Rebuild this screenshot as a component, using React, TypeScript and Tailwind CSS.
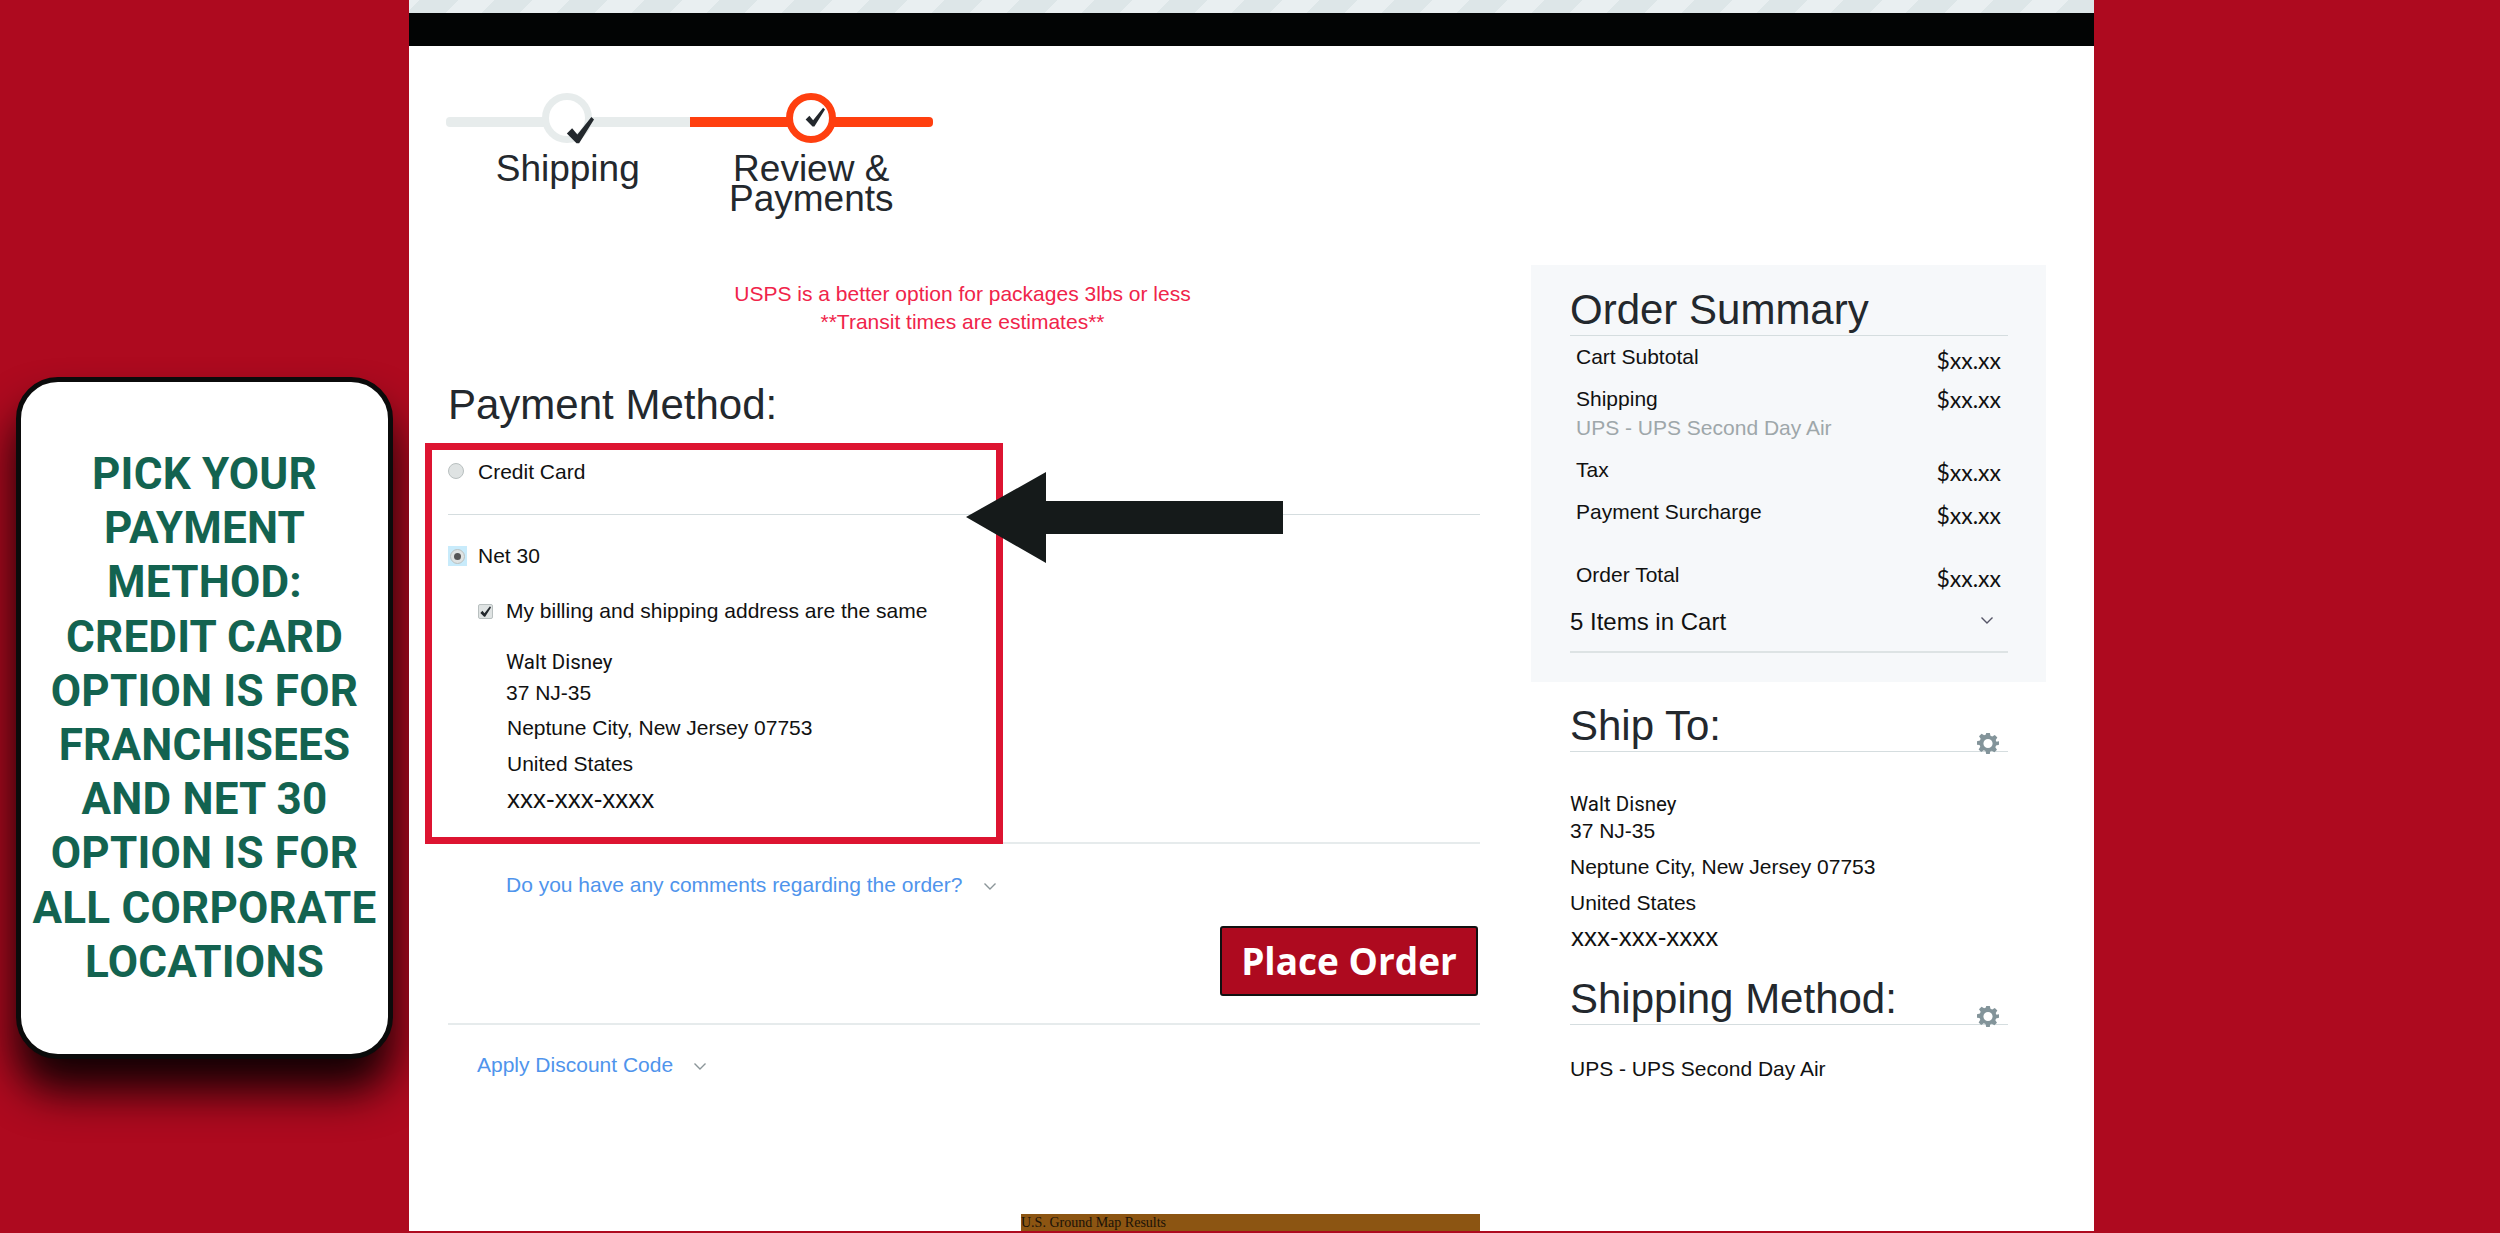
const sans = "font-['Liberation_Sans',Arial,sans-serif]";

const summaryRows = [
  { label: 'Cart Subtotal', rowClass: 'h-[42px] pt-[8px]', valueClass: 'mt-[3px]' },
  { label: 'Shipping', sub: 'UPS - UPS Second Day Air', rowClass: 'h-[72px] pt-[8px]', valueClass: 'mt-0' },
  { label: 'Tax', rowClass: 'h-[42px] pt-[7px]', valueClass: 'mt-[2px]' },
  { label: 'Payment Surcharge', rowClass: 'h-[65px] pt-[7px]', valueClass: 'mt-[3px]' },
  { label: 'Order Total', rowClass: 'h-[46px] pt-[5px]', valueClass: 'mt-[3px]' },
];

function Chevron({ className }: { className: string }) {
  return (
    <svg viewBox="0 0 14 9" className={className} fill="none" stroke="currentColor" strokeWidth="1.4">
      <path d="M1.5 1.5 7 7l5.5-5.5" />
    </svg>
  );
}

function Gear() {
  return (
    <svg viewBox="0 0 24 24" className="w-[22px] h-[22px] text-[#83949a] -mb-[3px] mr-[9px]" fill="currentColor">
      <path
        fillRule="evenodd"
        d="M10 1h4l.7 3.2 1.9.8 2.8-1.8 2.8 2.8-1.8 2.8.8 1.9L24 10v4l-3.2.7-.8 1.9 1.8 2.8-2.8 2.8-2.8-1.8-1.9.8L14 24h-4l-.7-3.2-1.9-.8-2.8 1.8-2.8-2.8 1.8-2.8-.8-1.9L0 14v-4l3.2-.7.8-1.9-1.8-2.8 2.8-2.8 2.8 1.8 1.9-.8L10 1Zm2 6.5a5 5 0 1 0 0 10 5 5 0 0 0 0-10Z"
      />
    </svg>
  );
}

function Check({ className }: { className: string }) {
  return (
    <svg viewBox="0 0 32 32" className={className} fill="#23282d">
      <path d="M1 20l6-6 6 7L29 1l3 3-17 27h-3L1 20Z" />
    </svg>
  );
}

function SideHeading({ title, withGear }: { title: string; withGear?: boolean }) {
  return (
    <div className="flex items-end justify-between border-b border-[#d5dddf] h-[56px]">
      <h2 className="text-[42px] leading-[50px] text-[#23282d]">{title}</h2>
      {withGear && <Gear />}
    </div>
  );
}

function ProgressStep({
  label,
  active,
  first,
  last,
}: {
  label: React.ReactNode;
  active?: boolean;
  first?: boolean;
  last?: boolean;
}) {
  return (
    <div className="w-[243.5px] flex flex-col items-center">
      <div className="relative w-full h-[50px] shrink-0 flex items-center">
        <div
          className={`w-full h-[10px] mt-[8px] ${active ? 'bg-[#ff3f0f]' : 'bg-[#e7ecec]'} ${first ? 'rounded-l' : ''} ${last ? 'rounded-r' : ''}`}
        />
        <div
          className={`absolute left-[96px] top-0 w-[50px] h-[50px] rounded-full bg-white border-[7px] ${active ? 'border-[#ff3f0f]' : 'border-[#e7ecec]'}`}
        />
        {active ? (
          <Check className="absolute left-[114px] top-[14px] w-[22px] h-[20px]" />
        ) : (
          <Check className="absolute left-[118px] top-[23px] w-[32px] h-[28px]" />
        )}
      </div>
      <div className="mt-[11px] text-[37px] leading-[30px] text-[#23282d] text-center">{label}</div>
    </div>
  );
}

export default function App() {
  return (
    <div className={`w-[2500px] h-[1233px] flex overflow-hidden bg-[#ae0a1f] ${sans}`}>
      {/* Left callout */}
      <div className="w-[409px] shrink-0 pl-[16px] pt-[377px]">
        <div className="w-[377px] h-[682px] rounded-[42px] border-[5px] border-[#0b0b0b] bg-white shadow-[0_32px_44px_rgba(0,0,0,0.9)] pt-[65px] flex flex-col items-center">
          <p className="font-['Roboto',sans-serif] font-bold text-[#136350] text-[44px] leading-[54.2px] tracking-[0.2px] text-center whitespace-nowrap">
            PICK YOUR
            <br />
            PAYMENT
            <br />
            METHOD:
            <br />
            CREDIT CARD
            <br />
            OPTION IS FOR
            <br />
            FRANCHISEES
            <br />
            AND NET 30
            <br />
            OPTION IS FOR
            <br />
            ALL CORPORATE
            <br />
            LOCATIONS
          </p>
        </div>
      </div>

      {/* Page */}
      <div className="w-[1685px] shrink-0 h-[1231px] bg-white flex flex-col">
        <div className="h-[13px] bg-[repeating-linear-gradient(-45deg,#dde6e8_0px,#dde6e8_27px,#e9eff1_27px,#e9eff1_53px)]" />
        <div className="h-[33px] bg-[#020404]" />

        <div className="pl-[37px] pt-[47px] flex h-[168px]">
          <ProgressStep label="Shipping" first />
          <ProgressStep
            label={
              <>
                Review &amp;
                <br />
                Payments
              </>
            }
            active
            last
          />
        </div>

        <div className="flex flex-1 min-h-0">
          {/* Main column */}
          <div className="ml-[39px] w-[1032px] shrink-0 flex flex-col">
            <div className="mt-[66px] text-center text-[21px] leading-[28px] text-[#f0244a] pr-[3px]">
              <p>USPS is a better option for packages 3lbs or less</p>
              <p>**Transit times are estimates**</p>
            </div>

            <h2 className="mt-[44px] h-[50px] text-[42px] leading-[50px] text-[#23282d]">Payment Method:</h2>

            <div className="relative mt-[13px]">
              {/* highlight box over the form */}
              <div className="absolute -left-[23px] top-0 w-[578px] h-[401px] border-[7px] border-[#dd1431]" />
              {/* arrow */}
              <svg viewBox="0 0 317 91" className="absolute left-[518px] top-[29px] w-[317px] h-[91px]" fill="#151a1a">
                <path d="M0 45 80 0v29h237v33H80v29L0 45Z" />
              </svg>

              <div className="h-[72px] border-b border-[#d5dddf] pt-[17px] flex items-start">
                <span className="mt-[3px] w-4 h-4 rounded-full bg-[#dfe3e3] border border-[#b9c0c0]" />
                <span className="ml-[14px] text-[21px] leading-[24px] text-[#111]">Credit Card</span>
              </div>

              <div className="h-[329px] border-b-2 border-[#e6ebec] pt-[29px]">
                <div className="flex items-center h-[24px]">
                  <span className="w-[19px] h-[20px] flex items-center justify-center bg-[#c8ebfb]">
                    <span className="w-[15px] h-[15px] rounded-full bg-[#dfe3e3] border border-[#b9c0c0] flex items-center justify-center">
                      <span className="w-[7px] h-[7px] rounded-full bg-[#555]" />
                    </span>
                  </span>
                  <span className="ml-[11px] text-[21px] leading-[24px] text-[#111]">Net 30</span>
                </div>

                <div className="ml-[30px] mt-[31px] flex items-center h-[24px]">
                  <span className="w-[15px] h-[15px] rounded-[2px] bg-[#dfe3e3] border border-[#b9c0c0] flex items-center justify-center">
                    <Check className="w-[11px] h-[11px]" />
                  </span>
                  <span className="ml-[13px] text-[21px] leading-[24px] text-[#111]">
                    My billing and shipping address are the same
                  </span>
                </div>

                <div className="ml-[58px] mt-[27px] text-[21px] text-[#111]">
                  <p className="font-['Roboto',sans-serif] text-[20.5px] leading-[24px]">Walt Disney</p>
                  <p className="leading-[24px] mt-[7px]">37 NJ-35</p>
                  <p className="leading-[24px] mt-[11px] ml-[1px]">Neptune City, New Jersey 07753</p>
                  <p className="leading-[24px] mt-[12px] ml-[1px]">United States</p>
                  <p className="text-[26px] leading-[24px] mt-[11px] ml-[1px]">xxx-xxx-xxxx</p>
                </div>
              </div>
            </div>

            <div className="ml-[58px] mt-[29px] h-[24px] flex items-center text-[21px] text-[#4f94ec]">
              <span>Do you have any comments regarding the order?</span>
              <Chevron className="ml-[21px] w-[14px] h-[9px] mt-[3px] text-[#8b9599]" />
            </div>

            <div className="flex justify-end mt-[29px] mr-[2px]">
              <button className="w-[258px] h-[70px] rounded-[3px] border-2 border-[#111] bg-[#ae0a1f] font-['Open_Sans',sans-serif] font-bold text-white text-[37px]">
                Place Order
              </button>
            </div>

            <div className="mt-[27px] border-t-2 border-[#e6ebec]" />

            <div className="ml-[29px] mt-[28px] h-[24px] flex items-center text-[21px] text-[#4f94ec]">
              <span>Apply Discount Code</span>
              <Chevron className="ml-[20px] w-[14px] h-[9px] mt-[3px] text-[#8b9599]" />
            </div>

            <div className="mt-auto ml-[573px] h-[17px] bg-[#8c5512] font-['Liberation_Serif',serif] text-[14px] leading-[17px] text-[#1a1208] whitespace-nowrap">
              U.S. Ground Map Results
            </div>
          </div>

          {/* Sidebar */}
          <div className="ml-[51px] w-[515px] shrink-0 pt-[51px] text-[#111]">
            <div className="h-[417px] bg-[#f6f8fa] pl-[39px] pr-[38px] pt-[15px]">
              <SideHeading title="Order Summary" />
              {summaryRows.map((row) => (
                <div key={row.label} className={`pl-[6px] pr-[7px] flex justify-between ${row.rowClass}`}>
                  <div className="text-[21px] leading-[26px]">
                    <p>{row.label}</p>
                    {row.sub && <p className="text-[#9ea7aa] mt-[3px]">{row.sub}</p>}
                  </div>
                  <span className={`font-['Lato',sans-serif] text-[23px] leading-[26px] ${row.valueClass}`}>$xx.xx</span>
                </div>
              ))}
              <div className="h-[50px] border-b-2 border-[#dde3e4] flex items-start justify-between pr-[14px]">
                <span className="text-[24px] leading-[30px] mt-[4px]">5 Items in Cart</span>
                <Chevron className="w-[14px] h-[9px] mt-[13px] text-[#556]" />
              </div>
            </div>

            <div className="pl-[39px] pr-[38px]">
              <div className="mt-[14px]">
                <SideHeading title="Ship To:" withGear />
              </div>
              <div className="mt-[40px] text-[21px]">
                <p className="font-['Roboto',sans-serif] text-[20.5px] leading-[24px]">Walt Disney</p>
                <p className="leading-[24px] mt-[3px]">37 NJ-35</p>
                <p className="leading-[24px] mt-[12px]">Neptune City, New Jersey 07753</p>
                <p className="leading-[24px] mt-[12px]">United States</p>
                <p className="text-[26px] leading-[24px] mt-[10px] ml-[1px]">xxx-xxx-xxxx</p>
              </div>
              <div className="mt-[20px]">
                <SideHeading title="Shipping Method:" withGear />
              </div>
              <p className="mt-[32px] text-[21px] leading-[24px]">UPS - UPS Second Day Air</p>
            </div>
          </div>
        </div>
      </div>

      <div className="flex-1" />
    </div>
  );
}
